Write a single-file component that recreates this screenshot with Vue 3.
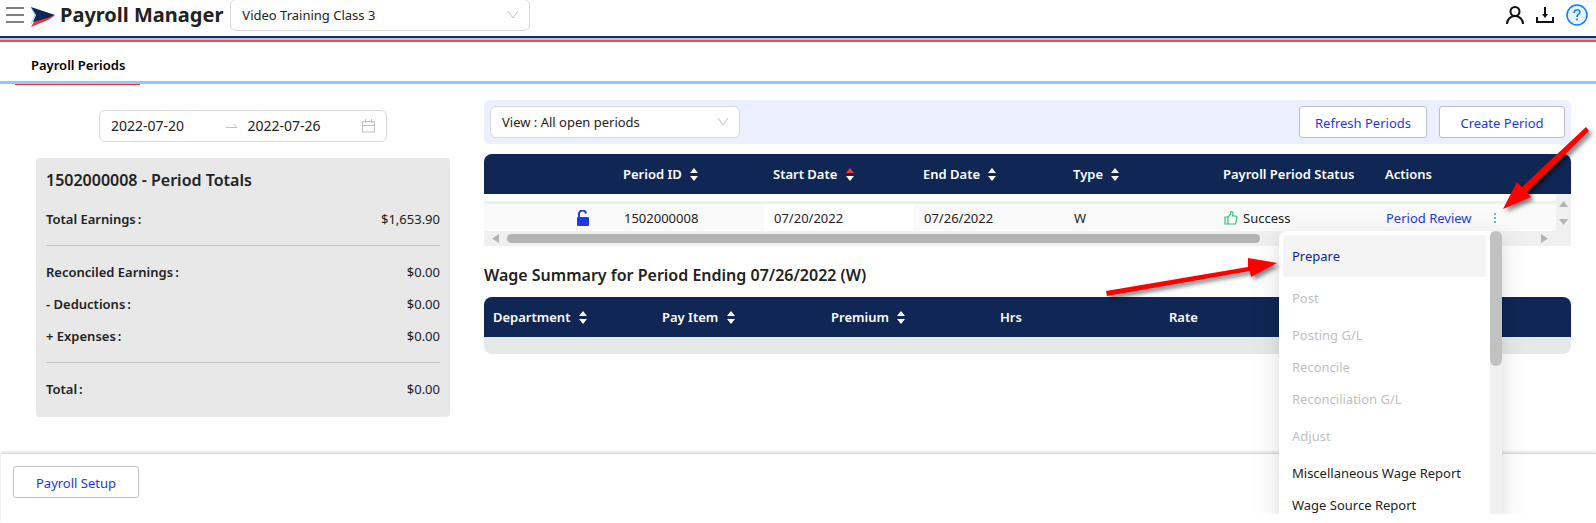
<script setup>
import { ref } from 'vue'

const company = ref('Video Training Class 3')
const view = ref('View : All open periods')
const startDate = ref('2022-07-20')
const endDate = ref('2022-07-26')

// totals are split in groups, a line is drawn between them
const totals = [
  [{ label: 'Total Earnings', value: '$1,653.90' }],
  [
    { label: 'Reconciled Earnings', value: '$0.00' },
    { label: '- Deductions', value: '$0.00' },
    { label: '+ Expenses', value: '$0.00' }
  ],
  [{ label: 'Total', value: '$0.00' }]
]

const periodColumns = [
  { key: 'lock', label: '' },
  { key: 'id', label: 'Period ID', sort: true },
  { key: 'start', label: 'Start Date', sort: true, active: true },
  { key: 'end', label: 'End Date', sort: true },
  { key: 'type', label: 'Type', sort: true },
  { key: 'status', label: 'Payroll Period Status' },
  { key: 'actions', label: 'Actions' }
]

const wageColumns = [
  { label: 'Department', sort: true },
  { label: 'Pay Item', sort: true },
  { label: 'Premium', sort: true },
  { label: 'Hrs' },
  { label: 'Rate' },
  { label: '' }
]

const menuItems = [
  { label: 'Prepare', tall: true, active: true },
  { label: 'Post', tall: true, disabled: true },
  { label: 'Posting G/L', disabled: true },
  { label: 'Reconcile', disabled: true },
  { label: 'Reconciliation G/L', disabled: true },
  { label: 'Adjust', tall: true, disabled: true },
  { label: 'Miscellaneous Wage Report' },
  { label: 'Wage Source Report' }
]
</script>

<template>
  <div class="page">
    <header class="topbar">
      <button class="icon-btn" aria-label="Menu">
        <svg width="18" height="18" viewBox="0 0 18 18"><path d="M0 2h18M0 9h18M0 16h18" stroke="#808080" stroke-width="2" /></svg>
      </button>
      <svg class="logo" width="24" height="20" viewBox="0 0 24 20">
        <path d="M0 0L4 8L0 17" fill="none" stroke="#8fd3dc" />
        <path d="M0 20L4 13L24 8.500L17 13Z" fill="#f5333f" />
        <path d="M0 0L24 8L17 11L2 15L5 8Z" fill="#102654" />
      </svg>
      <h1>Payroll Manager</h1>
      <div class="select company">
        <select v-model="company" aria-label="Company">
          <option>Video Training Class 3</option>
        </select>
        <svg class="chevron" width="12" height="12" viewBox="0 0 12 12"><path d="M1 2l5 7 5-7" fill="none" stroke="#bfbfbf" /></svg>
      </div>
      <div class="tools">
        <button class="icon-btn" aria-label="User">
          <svg width="18" height="18" viewBox="0 0 18 18" fill="none" stroke="#111" stroke-width="2"><circle cx="9" cy="5.500" r="4.500" /><path d="M1 18c0-4 3-8 8-8s8 4 8 8" /></svg>
        </button>
        <button class="icon-btn" aria-label="Download">
          <svg width="18" height="18" viewBox="0 0 18 18"><path d="M9 1v8M1 11v5h16v-5" fill="none" stroke="#111" stroke-width="2" /><path d="M6 8h6l-3 4z" fill="#111" /></svg>
        </button>
        <button class="icon-btn" aria-label="Help">
          <svg width="22" height="22" viewBox="0 0 22 22" fill="none"><circle cx="11" cy="11" r="10" fill="#e6f4ff" stroke="#1677ff" stroke-width="1.500" /><path d="M8 9c0-4 6-4 6-1 0 2-3 2-3 5" stroke="#1677ff" stroke-width="1.500" /><circle cx="11" cy="15.500" r="1" fill="#1677ff" /></svg>
        </button>
      </div>
    </header>

    <nav class="tabs">
      <a href="#" class="tab">Payroll Periods</a>
    </nav>

    <main class="content">
      <aside class="side">
        <div class="range">
          <input v-model="startDate" aria-label="Start date">
          <svg width="12" height="12" viewBox="0 0 12 12"><path d="M0 7.500h11L7.500 4" fill="none" stroke="#bfbfbf" /></svg>
          <input v-model="endDate" aria-label="End date">
          <svg width="13" height="14" viewBox="0 0 13 14"><path d="M.5 2.500h12v10.500H.5zM.5 6.500h12M3.500 0v4M9.500 0v4" fill="none" stroke="#bfbfbf" /></svg>
        </div>
        <section class="totals">
          <h2>1502000008 - Period Totals</h2>
          <dl v-for="(group, i) in totals" :key="i">
            <div v-for="row in group" :key="row.label">
              <dt>{{ row.label }}<span class="colon">:</span></dt>
              <dd>{{ row.value }}</dd>
            </div>
          </dl>
        </section>
      </aside>

      <section class="periods">
        <div class="toolbar">
          <div class="select view">
            <select v-model="view" aria-label="View">
              <option>View : All open periods</option>
            </select>
            <svg class="chevron" width="12" height="12" viewBox="0 0 12 12"><path d="M1 2l5 7 5-7" fill="none" stroke="#bfbfbf" /></svg>
          </div>
          <button class="btn refresh">Refresh Periods</button>
          <button class="btn">Create Period</button>
        </div>

        <div class="period-grid">
          <table class="period-table">
            <colgroup>
              <col v-for="col in periodColumns" :key="col.key" :class="'col-' + col.key">
            </colgroup>
            <thead>
              <tr>
                <th v-for="col in periodColumns" :key="col.key">
                  {{ col.label }}
                  <svg v-if="col.sort" class="sort" width="8" height="13" viewBox="0 0 8 13">
                    <path d="M4 0l4 5H0z" :fill="col.active ? '#f5333f' : '#fff'" />
                    <path d="M4 13l4-5H0z" fill="#fff" />
                  </svg>
                </th>
              </tr>
            </thead>
            <tbody>
              <tr class="spacer"><td colspan="7"></td></tr>
              <tr class="row">
                <td class="lock">
                  <svg width="12" height="16" viewBox="0 0 12 16"><rect y="7" width="12" height="9" rx="1" fill="#1d39e6" /><path d="M2 8V4.500a3.500 3.500 0 0 1 7-1" fill="none" stroke="#1d39e6" stroke-width="2" /></svg>
                </td>
                <td>1502000008</td>
                <td class="sorted">07/20/2022</td>
                <td>07/26/2022</td>
                <td>W</td>
                <td>
                  <span class="status">
                    <svg width="14" height="14" viewBox="0 0 14 14" fill="none" stroke="#3dbb85" stroke-width="1.200"><path d="M1 6h3v7H1zM4 6l2.500-2.500.5-3c2 0 2.500 1.500 1.500 4.500H12l1 1-1.500 7H4" /></svg>
                    Success
                  </span>
                </td>
                <td>
                  <span class="actions">
                    <a href="#">Period Review</a>
                    <button class="more" aria-label="More actions">
                      <svg width="2" height="10" viewBox="0 0 2 10"><path d="M0 0h2v2H0zM0 4h2v2H0zM0 8h2v2H0z" fill="#69a8ff" /></svg>
                    </button>
                  </span>
                </td>
              </tr>
            </tbody>
          </table>
          <div class="vbar">
            <svg width="9" height="6" viewBox="0 0 9 6"><path d="M4.500 0L9 6H0z" fill="#b3b3b3" /></svg>
            <svg width="9" height="6" viewBox="0 0 9 6"><path d="M4.500 6L9 0H0z" fill="#b3b3b3" /></svg>
          </div>
          <div class="hbar">
            <svg width="7" height="9" viewBox="0 0 7 9"><path d="M0 4.500L7 0v9z" fill="#b3b3b3" /></svg>
            <div class="track"><div class="thumb"></div></div>
            <svg width="7" height="9" viewBox="0 0 7 9"><path d="M7 4.500L0 0v9z" fill="#b3b3b3" /></svg>
          </div>
        </div>

        <h2 class="wage-title">Wage Summary for Period Ending 07/26/2022 (W)</h2>
        <div class="wage-grid">
          <table class="wage-table">
            <thead>
              <tr>
                <th v-for="(col, i) in wageColumns" :key="i">
                  {{ col.label }}
                  <svg v-if="col.sort" class="sort" width="8" height="13" viewBox="0 0 8 13">
                    <path d="M4 0l4 5H0zM4 13l4-5H0z" fill="#fff" />
                  </svg>
                </th>
              </tr>
            </thead>
          </table>
        </div>
      </section>
    </main>

    <footer class="footer">
      <button class="btn">Payroll Setup</button>
    </footer>

    <div class="menu">
      <ul>
        <li v-for="item in menuItems" :key="item.label">
          <button :class="{ tall: item.tall, active: item.active }" :disabled="item.disabled">{{ item.label }}</button>
        </li>
      </ul>
      <div class="menu-bar"><div class="menu-thumb"></div></div>
    </div>

    <!-- pointers to the actions menu and to Prepare -->
    <svg class="pointers" width="496" height="180" viewBox="1100 120 496 180">
      <g fill="#f00">
        <path d="M1586 127L1589 131L1527 192L1531 197L1503 209L1517 182L1522 187Z" />
        <path d="M1106 291L1248 267L1248 258L1277 263L1251 277L1250 271L1107 296Z" />
      </g>
    </svg>
  </div>
</template>

<style>
body {
  margin: 0;
  background: #fff;
}
</style>

<style scoped>
.page {
  position: relative;
  display: flex;
  flex-direction: column;
  overflow: hidden;
  min-height: 100vh;
  font-family: "Noto Sans", "Open Sans", sans-serif;
  font-size: 13px;
  line-height: 22px;
  color: #222;
}

.page * {
  box-sizing: border-box;
}

h1,
h2,
ul,
dl,
dd {
  margin: 0;
  padding: 0;
}

svg {
  display: block;
  flex: none;
}

button,
input,
select {
  font: inherit;
  color: inherit;
}

a {
  color: #1d39e6;
  text-decoration: none;
}

.topbar {
  display: flex;
  align-items: center;
  height: 42px;
  padding: 0 8px 10px 6px;
  border-bottom: 2px solid #ea4c5f;
  box-shadow: inset 0 -2px #a5cdd8, inset 0 -4px #1c2b5e;
}

.topbar h1 {
  margin: 0 7px 0 5px;
  font-size: 20px;
  line-height: 28px;
}

.icon-btn {
  padding: 0;
  border: 0;
  background: none;
}

.logo {
  margin: 4px 0 0 7px;
}

.select {
  position: relative;
}

.select select {
  width: 100%;
  height: 32px;
  padding: 0 11px;
  border: 1px solid #d9d9d9;
  border-radius: 6px;
  background: #fff;
  appearance: none;
}

.chevron {
  position: absolute;
  top: 10px;
  right: 11px;
}

.company {
  width: 300px;
}

.tools {
  display: flex;
  align-items: center;
  gap: 12px;
  margin-left: auto;
}

.tabs {
  height: 42px;
  padding-left: 15px;
  border-bottom: 3px solid #91c8ff;
}

.tab {
  display: inline-block;
  height: 43px;
  padding: 12px 15px 8px 16px;
  border-bottom: 1px solid #f5333f;
  font-weight: 600;
  color: #000;
}

.content {
  display: flex;
  align-items: flex-start;
  gap: 34px;
  padding: 16px 25px 0 36px;
}

.side {
  flex: none;
  width: 414px;
  padding-top: 10px;
}

.range {
  display: flex;
  align-items: center;
  width: 288px;
  height: 32px;
  margin: 0 auto 16px;
  padding: 0 11px;
  border: 1px solid #d9d9d9;
  border-radius: 6px;
}

.range input {
  flex: 1;
  min-width: 0;
  padding: 0;
  border: 0;
  background: none;
  font-size: 14px;
}

.range svg {
  margin: 0 10px 0 4px;
}

.range svg:last-child {
  margin-right: 0;
}

.totals {
  padding: 10px 10px 12px;
  border-radius: 4px;
  background: #e8e8e8;
}

.totals h2,
.wage-title {
  font-size: 16px;
  font-weight: 600;
  line-height: 24px;
}

.totals h2 {
  margin-bottom: 11px;
}

.totals dl + dl {
  margin-top: 10px;
  padding-top: 10px;
  border-top: 1px solid #c0c0c0;
}

.totals dl div {
  display: flex;
  justify-content: space-between;
  padding: 5px 0;
}

.totals dt {
  font-weight: 600;
}

.colon {
  margin-left: 2px;
}

.periods {
  flex: 1;
  min-width: 0;
}

.toolbar {
  display: flex;
  gap: 12px;
  padding: 6px;
  border-radius: 6px;
  background: #ecefff;
}

.view {
  width: 250px;
}

.btn {
  height: 32px;
  width: 126px;
  padding: 2px 0 0;
  border: 1px solid #bfbfbf;
  border-radius: 3px;
  background: #fff;
  color: #1d39e6;
}

.refresh {
  width: 128px;
  margin-left: auto;
}

.period-grid {
  display: grid;
  grid-template-columns: 1fr 15px;
  margin-top: 10px;
  background: #f0f0f0;
  border-radius: 8px 8px 0 0;
}

table {
  table-layout: fixed;
  border-spacing: 0;
  text-align: left;
}

th {
  height: 40px;
  padding: 0 9px;
  color: #fff;
  font-weight: 600;
  white-space: nowrap;
}

.sort {
  display: inline-block;
  margin-left: 5px;
  vertical-align: -2px;
}

.period-table {
  grid-column: 1 / 3;
  grid-row: 1;
  width: 100%;
}

.period-table thead {
  background: #102654;
}

.period-grid,
.wage-grid {
  overflow: hidden;
}

.col-lock {
  width: 130px;
}

.col-id,
.col-start,
.col-end,
.col-type {
  width: 150px;
}

.col-status {
  width: 162px;
}

.spacer td {
  height: 10px;
  padding: 0;
  border-bottom: 3px solid #efefef;
  background: #fff;
}

.row td {
  height: 27px;
  padding: 0 10px;
  background: #fafafa;
}

.row .sorted {
  background: #fff;
}

.lock svg {
  margin-left: 83px;
}

.status,
.actions {
  display: flex;
  align-items: center;
  gap: 5px;
}

.more {
  margin-left: 17px;
  padding: 0;
  border: 0;
  background: none;
}

.vbar {
  grid-column: 2;
  grid-row: 1;
  z-index: 1;
  display: flex;
  flex-direction: column;
  align-items: center;
  gap: 12px;
  margin-top: 40px;
  padding-top: 7px;
  background: #f0f0f0;
}

.hbar {
  grid-column: 1 / 3;
  display: flex;
  align-items: center;
  gap: 8px;
  height: 15px;
  padding: 0 23px 0 8px;
}

.track {
  flex: 1;
}

.thumb {
  width: 73.4%;
  height: 9px;
  border-radius: 5px;
  background: #b3b3b3;
}

.wage-title {
  margin: 17px 0 10px;
}

.wage-grid {
  padding-bottom: 17px;
  border-radius: 8px;
  background: #e8e8e8;
}

.wage-table {
  width: 100%;
  background: #102654;
}

.wage-table th {
  width: 169px;
}

.wage-table th:last-child {
  width: auto;
}

.footer {
  flex: 1;
  margin: 36px 0 0 1px;
  padding: 12px;
  border-top: 1px solid #d9d9d9;
  box-shadow: 0 -1px 3px rgba(0, 0, 0, 0.15);
}

.menu {
  position: absolute;
  top: 231px;
  right: 94px;
  display: flex;
  width: 223px;
  height: 283px;
  border-radius: 8px 6px 0 0;
  background: #fff;
  box-shadow: 0 6px 16px rgba(0, 0, 0, 0.08), 0 3px 6px -4px rgba(0, 0, 0, 0.12), 0 9px 28px 8px rgba(0, 0, 0, 0.05);
  clip-path: inset(-40px -60px 0 -60px);
}

.menu ul {
  flex: 1;
  padding: 4px;
  overflow: hidden;
  list-style: none;
}

.menu li button {
  display: block;
  width: 100%;
  height: 32px;
  padding: 0 9px;
  border: 0;
  border-radius: 4px;
  background: none;
  text-align: left;
}

.menu li .tall {
  height: 42px;
}

.menu li .active {
  background: #f4f4f4;
  color: #10239e;
}

.menu li button:disabled {
  color: #bfbfbf;
}

.menu-bar {
  width: 12px;
  border-radius: 6px 6px 0 0;
  background: #f0f0f0;
}

.menu-thumb {
  height: 135px;
  border-radius: 6px;
  background: #c1c1c1;
}

.pointers {
  position: absolute;
  top: 120px;
  right: 0;
  filter: drop-shadow(3px 3px 2px rgba(0, 0, 0, 0.5));
  pointer-events: none;
}
</style>
